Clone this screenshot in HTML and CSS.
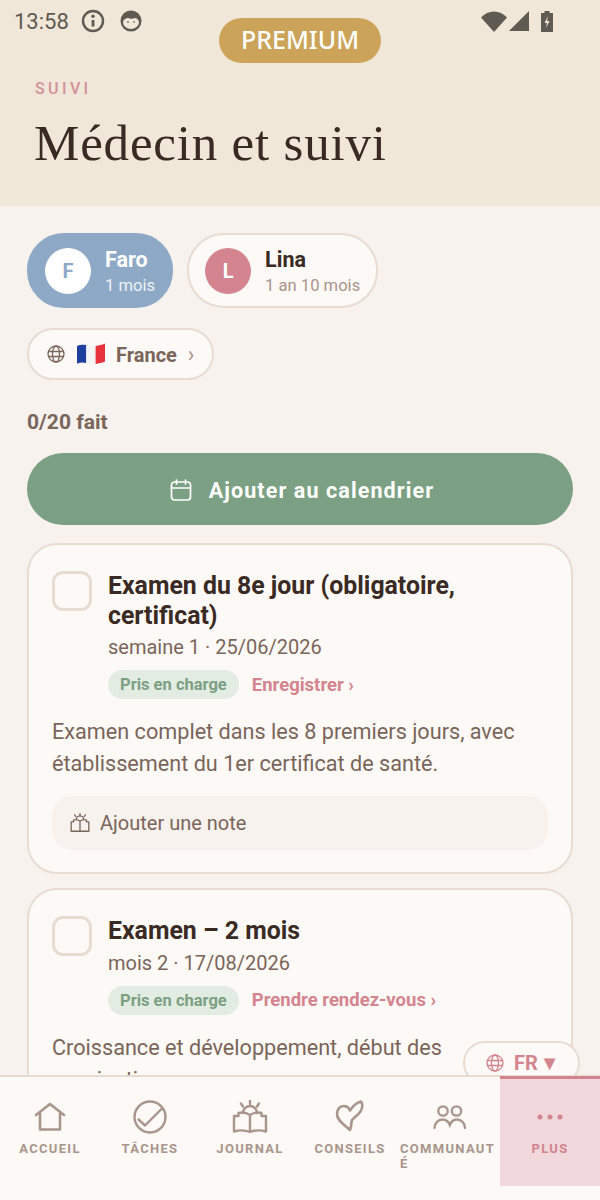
FILE: index.html
```html
<!DOCTYPE html>
<html lang="fr">
<head>
    <meta charset="UTF-8">
    <meta name="viewport" content="width=device-width, initial-scale=1.0">
    <title>Médecin et suivi</title>
    <link rel="stylesheet" href="styles.css">
</head>
<body>
<div class="screen">
    <!-- Header -->
    <header class="header">
        <div class="status-bar">
            <span class="status-time">13:58</span>
            <svg class="status-info" width="24" height="24" viewBox="0 0 24 24" fill="none" stroke="#5f5a52" stroke-width="2.4">
                <circle cx="12" cy="12" r="10"/>
                <path d="M12 11v6.500" stroke-width="2.800"/>
                <circle cx="12" cy="7.300" r="1.700" fill="#5f5a52" stroke="none"/>
            </svg>
            <svg class="status-face" width="22" height="22" viewBox="0 0 22 22">
                <circle cx="11" cy="11" r="10.500" fill="#5f5a52"/>
                <path d="M3 12c1-3 3-4 5-4 2 1 5 1 7 0 2 0 3.500 2 4 4 0 4-4 7-8 7s-8-3-8-7z" fill="#f0e7d8"/>
                <circle cx="8" cy="12" r="1" fill="#8d867b"/>
                <circle cx="14" cy="12" r="1" fill="#8d867b"/>
            </svg>
            <div class="status-right">
                <svg width="26" height="21" viewBox="0 0 26 21"><path d="M0 6.500C3.500 2.500 8 .5 13 .5s9.500 2 13 6L13 21z" fill="#5f5a52"/></svg>
                <svg width="20" height="20" viewBox="0 0 20 20"><path d="M20 0v20H0z" fill="#5f5a52"/></svg>
                <svg class="status-battery" width="12" height="21" viewBox="0 0 12 21">
                    <path d="M3.500 0h5v2H12v19H0V2h3.500z" fill="#5f5a52"/>
                    <path d="M7 5 3.500 12H6l-1 5 3.500-7H6z" fill="#f0e7d8"/>
                </svg>
            </div>
        </div>
        <div class="eyebrow">SUIVI</div>
        <h1 class="page-title">Médecin et suivi</h1>
    </header>

    <div class="premium">PREMIUM</div>

    <!-- Content -->
    <main class="content">
        <div class="children">
            <div class="child child-active">
                <span class="avatar avatar-white">F</span>
                <div class="child-text">
                    <div class="child-name">Faro</div>
                    <div class="child-age">1 mois</div>
                </div>
            </div>
            <div class="child">
                <span class="avatar avatar-pink">L</span>
                <div class="child-text">
                    <div class="child-name">Lina</div>
                    <div class="child-age">1 an 10 mois</div>
                </div>
            </div>
        </div>

        <div class="country">
            <svg width="18" height="18" viewBox="0 0 18 18" fill="none" stroke="#7a655a" stroke-width="1.300">
                <circle cx="9" cy="9" r="8"/>
                <ellipse cx="9" cy="9" rx="3.500" ry="8"/>
                <path d="M1 6.500h16M1 11.500h16"/>
            </svg>
            <svg class="flag" width="28" height="22" viewBox="0 0 28 22">
                <path d="M0 3c3-1.500 6-1.500 9.300-.8V20c-3.300-.8-6.300-.8-9.300.8z" fill="#1f3f9e"/>
                <path d="M9.300 2.200c3 .6 6 1.200 9.300.8v18c-3.300.4-6.300-.2-9.300-1z" fill="#f5f5f5"/>
                <path d="M18.600 3c3.300-.4 6.400-1.200 9.400-2.500V18.500c-3 1.300-6.100 2.100-9.400 2.500z" fill="#e8323c"/>
            </svg>
            <span class="country-name">France</span>
            <span class="country-arrow">›</span>
        </div>

        <div class="progress">0/20 fait</div>

        <div class="calendar-btn">
            <svg width="22" height="22" viewBox="0 0 22 22" fill="none" stroke="#fff" stroke-width="1.700" stroke-linecap="round">
                <rect x="1.500" y="3" width="19" height="18" rx="3"/>
                <path d="M1.500 9h19M6.500 1v4M15.500 1v4"/>
            </svg>
            <span>Ajouter au calendrier</span>
        </div>

        <section class="card">
            <div class="card-top">
                <span class="checkbox"></span>
                <div class="card-info">
                    <h2 class="card-title">Examen du 8e jour (obligatoire, certificat)</h2>
                    <div class="card-meta">semaine 1 · 25/06/2026</div>
                    <div class="card-tags">
                        <span class="tag">Pris en charge</span>
                        <span class="card-link">Enregistrer ›</span>
                    </div>
                </div>
            </div>
            <p class="card-desc">Examen complet dans les 8 premiers jours, avec établissement du 1er certificat de santé.</p>
            <div class="note">
                <svg width="20" height="20" viewBox="0 0 34 34" fill="none" stroke="#7a655a" stroke-width="2.200" stroke-linecap="round" stroke-linejoin="round">
                    <path d="M11 11a6 6 0 0 1 12 0M17 1v3M8 3l2 3M26 3l-2 3"/>
                    <path d="M17 14v17M17 14c-3-2-8-3-11-2v3H2v16h15M17 14c3-2 8-3 11-2v3h4v16H17"/>
                </svg>
                <span>Ajouter une note</span>
            </div>
        </section>

        <section class="card">
            <div class="card-top">
                <span class="checkbox"></span>
                <div class="card-info">
                    <h2 class="card-title">Examen – 2 mois</h2>
                    <div class="card-meta">mois 2 · 17/08/2026</div>
                    <div class="card-tags">
                        <span class="tag">Pris en charge</span>
                        <span class="card-link">Prendre rendez-vous ›</span>
                    </div>
                </div>
            </div>
            <p class="card-desc">Croissance et développement, début des vaccinations.</p>
        </section>

        <!-- Language button floats over the list -->
        <div class="lang">
            <svg width="18" height="18" viewBox="0 0 18 18" fill="none" stroke="#d4848e" stroke-width="1.300">
                <circle cx="9" cy="9" r="8"/>
                <ellipse cx="9" cy="9" rx="3.500" ry="8"/>
                <path d="M1 6.500h16M1 11.500h16"/>
            </svg>
            <span class="lang-text">FR ▼</span>
        </div>
    </main>

    <!-- Bottom navigation -->
    <nav class="bottom-nav">
        <div class="nav-item">
            <svg width="34" height="34" viewBox="0 0 34 34" fill="none" stroke="#a8958b" stroke-width="2.600" stroke-linejoin="round" stroke-linecap="round">
                <path d="M3 15 17 4l14 11M7 13v16.500h20V13"/>
            </svg>
            <span class="nav-label">ACCUEIL</span>
        </div>
        <div class="nav-item">
            <svg width="34" height="34" viewBox="0 0 34 34" fill="none" stroke="#a8958b" stroke-width="2.400" stroke-linecap="round" stroke-linejoin="round">
                <circle cx="17" cy="17" r="15.500"/>
                <path d="M5.500 19.500 12 25.500 28.500 9"/>
            </svg>
            <span class="nav-label">TÂCHES</span>
        </div>
        <div class="nav-item">
            <svg width="36" height="34" viewBox="0 0 36 34" fill="none" stroke="#a8958b" stroke-width="2.400" stroke-linecap="round" stroke-linejoin="round">
                <path d="M11 13a7 7 0 0 1 14 0M18 1v3M9 3.500l2 3M27 3.500l-2 3"/>
                <path d="M18 15v17M18 15c-3-2-8-3-11.500-2v3H2v15.500c5-1.500 11-1.500 16 .5 5-2 11-2 16-.5V16h-4.500v-3C26 12 21 13 18 15z"/>
            </svg>
            <span class="nav-label">JOURNAL</span>
        </div>
        <div class="nav-item">
            <svg width="34" height="34" viewBox="0 0 34 34" fill="none" stroke="#a8958b" stroke-width="2.600" stroke-linecap="round" stroke-linejoin="round">
                <path d="M17 30C12 25 4 21 4 14 4 9 7 6 10.500 6c3 0 5.500 2 6.500 4.500C20 6 24 2.500 28 1.500c1.500 2 1.500 6 0 9-1.500 3.500-6 6-9 9.500-1 3-.5 7-2 10z"/>
            </svg>
            <span class="nav-label">CONSEILS</span>
        </div>
        <div class="nav-item">
            <svg width="34" height="34" viewBox="0 0 34 34" fill="none" stroke="#a8958b" stroke-width="2.300" stroke-linecap="round">
                <circle cx="10" cy="11" r="4.700"/>
                <circle cx="23.500" cy="11" r="4.700"/>
                <path d="M1.500 28c0-5 4-8.500 8-8.500 3.500 0 6 2 7.300 5.500 1.300-3.500 4-5.500 7.200-5.500 4 0 8 3.500 8 8.500"/>
            </svg>
            <span class="nav-label">COMMUNAUTÉ</span>
        </div>
        <div class="nav-item nav-item-active">
            <svg width="34" height="34" viewBox="0 0 34 34" fill="#d4848e">
                <circle cx="7" cy="17" r="2.500"/>
                <circle cx="17" cy="17" r="2.500"/>
                <circle cx="27" cy="17" r="2.500"/>
            </svg>
            <span class="nav-label">PLUS</span>
        </div>
    </nav>
</div>
</body>
</html>
```

FILE: styles.css
```css
* {
    box-sizing: border-box;
}

html, body {
    margin: 0;
    padding: 0;
}

body {
    font-family: Roboto, "Liberation Sans", sans-serif;
    background-color: #f7f2ed;
    color: #3a2a24;
}

.screen {
    position: relative;
    width: 600px;
    height: 1200px;
    display: flex;
    flex-direction: column;
    overflow: hidden;
}

/* Header */
.header {
    height: 206px;
    flex-shrink: 0;
    background-color: #f0e7d8;
    padding: 8px 0 0 34px;
}

.status-bar {
    display: flex;
    align-items: center;
    height: 26px;
    margin-left: -20px;
    color: #5f5a52;
}

.status-time {
    font-size: 22px;
    width: 67px;
}

.status-face {
    margin-left: 15px;
}

.status-right {
    display: flex;
    align-items: center;
    gap: 2px;
    margin-left: 339px;
}

.status-battery {
    margin-left: 10px;
}

.eyebrow {
    margin: 47px 0 0 1px;
    font-size: 16px;
    font-weight: 500;
    letter-spacing: 3.400px;
    line-height: 16px;
    color: #d4909a;
}

.page-title {
    margin: 16px 0 0;
    font-family: "Liberation Serif", serif;
    font-size: 51px;
    font-weight: 400;
    line-height: 60px;
    letter-spacing: 0.8px;
    color: #3a2a24;
}

.premium {
    position: absolute;
    top: 18px;
    left: 219px;
    width: 162px;
    height: 45px;
    border-radius: 23px;
    background-color: #cba45a;
    color: #fff;
    font-family: "Noto Sans", sans-serif;
    font-size: 25px;
    font-weight: 500;
    line-height: 42px;
    text-align: center;
}

/* Content */
.content {
    position: relative;
    flex: 1;
    min-height: 0;
    overflow: hidden;
    padding: 27px 27px 0;
}

.children {
    display: flex;
    gap: 14px;
}

.child {
    display: flex;
    align-items: center;
    gap: 14px;
    height: 75px;
    padding: 0 16px;
    border: 2px solid #e8dcd2;
    border-radius: 37px;
    background-color: #fdf9f6;
}

.child-active {
    background-color: #8ea9c6;
    border-color: #8ea9c6;
    color: #fff;
}

.child-text {
    padding-top: 4px;
}

.avatar {
    width: 46px;
    height: 46px;
    flex-shrink: 0;
    border-radius: 50%;
    font-size: 20px;
    font-weight: 700;
    line-height: 46px;
    text-align: center;
}

.avatar-white {
    background-color: #fff;
    color: #8ea9c6;
}

.avatar-pink {
    background-color: #d4848e;
    color: #fff;
}

.child-name {
    font-size: 21.500px;
    font-weight: 700;
    line-height: 26px;
}

.child-age {
    font-size: 16.600px;
    line-height: 25px;
    color: #a8958b;
}

.child-active .child-age {
    color: #fff;
    opacity: 0.85;
}

.country {
    display: inline-flex;
    align-items: center;
    height: 52px;
    margin-top: 20px;
    padding: 0 18px;
    border: 2px solid #e8dcd2;
    border-radius: 26px;
    background-color: #fdf9f6;
}

.flag {
    margin-left: 12px;
}

.country-name {
    margin-left: 11px;
    padding-top: 1px;
    font-size: 20px;
    font-weight: 700;
    color: #7a655a;
}

.country-arrow {
    margin-left: 11px;
    font-size: 22px;
    color: #a8958b;
}

.progress {
    margin-top: 27px;
    font-size: 21px;
    font-weight: 700;
    line-height: 30px;
    color: #7a655a;
}

.calendar-btn {
    display: flex;
    align-items: center;
    justify-content: center;
    gap: 17px;
    height: 72px;
    margin-top: 16px;
    padding: 2px 0 0 4px;
    border-radius: 36px;
    background-color: #7ba083;
    color: #fff;
    font-size: 21.500px;
    font-weight: 700;
    letter-spacing: 1.100px;
}

.card {
    margin-top: 18px;
    padding: 26px 23px 22px;
    border: 2px solid #e8dcd2;
    border-radius: 30px;
    background-color: #fdf9f6;
}

.card + .card {
    margin-top: 14px;
}

.card-top {
    display: flex;
    gap: 16px;
}

.checkbox {
    width: 40px;
    height: 40px;
    flex-shrink: 0;
    border: 3px solid #e8dcd2;
    border-radius: 11px;
}

.card-title {
    margin: 0;
    font-size: 24.850px;
    font-weight: 700;
    line-height: 29.500px;
    color: #3a2a24;
}

.card-meta {
    margin-top: 3px;
    font-size: 20px;
    line-height: 29px;
    color: #7a655a;
}

.card-tags {
    display: flex;
    align-items: center;
    gap: 13px;
    margin-top: 8px;
}

.tag {
    height: 29px;
    padding: 0 12px;
    border-radius: 15px;
    background-color: #e3ece2;
    color: #7ba083;
    font-size: 16.500px;
    font-weight: 700;
    line-height: 30px;
}

.card-link {
    font-size: 18.500px;
    font-weight: 700;
    color: #d4848e;
}

.card-desc {
    margin: 17px 0 0;
    font-size: 21.650px;
    line-height: 32px;
    color: #7a655a;
}

.note {
    display: flex;
    align-items: center;
    gap: 10px;
    height: 54px;
    margin-top: 16px;
    padding: 0 18px;
    border-radius: 20px;
    background-color: #f7f2ed;
    font-size: 20px;
    color: #7a655a;
}

.lang {
    position: absolute;
    top: 835px;
    left: 463px;
    display: flex;
    align-items: center;
    gap: 10px;
    width: 117px;
    height: 44px;
    padding-left: 21px;
    border: 2px solid #e8dcd2;
    border-radius: 22px;
    background-color: #fdf9f6;
    color: #d4848e;
    font-size: 20px;
    font-weight: 700;
}

.lang-text {
    word-spacing: -3px;
}

/* Bottom navigation */
.bottom-nav {
    position: relative;
    display: flex;
    height: 125px;
    flex-shrink: 0;
    border-top: 2px solid #e8dcd2;
    background-color: #fdf9f6;
}

.nav-item {
    width: 100px;
    height: 110px;
    display: flex;
    flex-direction: column;
    align-items: center;
    padding-top: 23px;
}

.nav-item-active {
    margin-top: -1px;
    padding-top: 21px;
    border-top: 3px solid #d4848e;
    background-color: #f0d8dc;
}

.nav-label {
    max-width: 100%;
    margin-top: 7px;
    font-size: 13px;
    font-weight: 700;
    line-height: 15px;
    letter-spacing: 1.300px;
    color: #a8958b;
    overflow-wrap: anywhere;
}

.nav-item-active .nav-label {
    color: #d4848e;
}
```
